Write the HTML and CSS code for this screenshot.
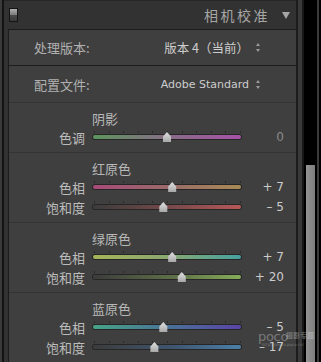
FILE: index.html
```html
<!DOCTYPE html>
<html lang="zh-CN">
<head>
    <meta charset="UTF-8">
    <meta name="viewport" content="width=device-width, initial-scale=1.0">
    <title>相机校准</title>
    <link rel="stylesheet" href="styles.css">
</head>
<body>
    <div class="app">
        <div class="side"></div>

        <div class="panel">
            <header class="panel-header">
                <div class="switch"><span class="switch-on"></span><span class="switch-off"></span></div>
                <h1>相机校准</h1>
                <span class="collapse"></span>
            </header>

            <div class="panel-body">
                <div class="select-row first">
                    <span class="select-label">处理版本:</span>
                    <span class="select-value">版本 4（当前）<span class="updown"></span></span>
                </div>
                <div class="select-row">
                    <span class="select-label">配置文件:</span>
                    <span class="select-value latin">Adobe Standard<span class="updown"></span></span>
                </div>

                <section class="group">
                    <h2>阴影</h2>
                    <div class="slider-row">
                        <span class="slider-label">色调</span>
                        <div class="slider"><div class="ticks"></div><div class="track shadow-tint"></div><span class="thumb" style="left: 50%"></span></div>
                        <span class="slider-value dim">0</span>
                    </div>
                </section>

                <section class="group">
                    <h2>红原色</h2>
                    <div class="slider-row">
                        <span class="slider-label">色相</span>
                        <div class="slider"><div class="ticks"></div><div class="track red-hue"></div><span class="thumb" style="left: 53.5%"></span></div>
                        <span class="slider-value">+ 7</span>
                    </div>
                    <div class="slider-row">
                        <span class="slider-label">饱和度</span>
                        <div class="slider"><div class="ticks"></div><div class="track red-sat"></div><span class="thumb" style="left: 47.5%"></span></div>
                        <span class="slider-value">– 5</span>
                    </div>
                </section>

                <section class="group">
                    <h2>绿原色</h2>
                    <div class="slider-row">
                        <span class="slider-label">色相</span>
                        <div class="slider"><div class="ticks"></div><div class="track green-hue"></div><span class="thumb" style="left: 53.5%"></span></div>
                        <span class="slider-value">+ 7</span>
                    </div>
                    <div class="slider-row">
                        <span class="slider-label">饱和度</span>
                        <div class="slider"><div class="ticks"></div><div class="track green-sat"></div><span class="thumb" style="left: 60%"></span></div>
                        <span class="slider-value">+ 20</span>
                    </div>
                </section>

                <section class="group">
                    <h2>蓝原色</h2>
                    <div class="slider-row">
                        <span class="slider-label">色相</span>
                        <div class="slider"><div class="ticks"></div><div class="track blue-hue"></div><span class="thumb" style="left: 47.5%"></span></div>
                        <span class="slider-value">– 5</span>
                    </div>
                    <div class="slider-row">
                        <span class="slider-label">饱和度</span>
                        <div class="slider"><div class="ticks"></div><div class="track blue-sat"></div><span class="thumb" style="left: 41.5%"></span></div>
                        <span class="slider-value">– 17</span>
                    </div>
                </section>
            </div>
        </div>

        <div class="gutter"></div>
        <div class="scrollbar"><div class="scroll-thumb"></div></div>
        <div class="edge-right"></div>

        <!-- 水印 -->
        <div class="watermark">
            <span class="wm-logo">poco</span>
            <span class="wm-text">摄影专题</span>
            <span class="wm-url">http://photo.poco.cn/</span>
        </div>
    </div>
</body>
</html>
```

FILE: styles.css
```css
:root {
    --header-bg: #323232;
    --body-bg: #3f3f3f;
    --text-color: #bdbdbd;
    --line-dark: #1c1c1c;
    --line-soft: #343434;
}

* {
    box-sizing: border-box;
    margin: 0;
    padding: 0;
}

body {
    background-color: #000;
    font-family: "Noto Sans CJK SC", "Liberation Sans", sans-serif;
    color: var(--text-color);
}

.app {
    position: relative;
    display: flex;
    width: 321px;
    height: 362px;
    overflow: hidden;
    background-color: #000;
}

.side {
    width: 4px;
    flex-shrink: 0;
    border-left: 2px solid #3a3a3a;
    background-color: #141414;
}

.panel {
    width: 294px;
    flex-shrink: 0;
    display: flex;
    flex-direction: column;
    background-color: var(--header-bg);
    border-right: 2px solid var(--line-dark);
}

/* başlık */
.panel-header {
    height: 29px;
    flex-shrink: 0;
    display: flex;
    align-items: center;
    padding-left: 5px;
    padding-right: 4px;
    border-top: 1px solid #262626;
}

.switch {
    width: 9px;
    height: 14px;
    display: flex;
    flex-direction: column;
    border: 1px solid #141414;
    background-color: #222;
}

.switch-on {
    flex: 1;
    background: linear-gradient(#b0b0b0, #7a7a7a);
}

.switch-off {
    flex: 1;
    background: linear-gradient(#4a4a4a, #3a3a3a);
}

.panel-header h1 {
    margin-left: auto;
    font-size: 14px;
    font-weight: normal;
    letter-spacing: 2.5px;
    color: #a6a6a6;
}

.collapse {
    width: 0;
    height: 0;
    margin-left: 12px;
    margin-right: 2px;
    border-left: 4px solid transparent;
    border-right: 4px solid transparent;
    border-top: 7px solid #a6a6a6;
}

/* gövde */
.panel-body {
    flex: 1;
    margin-left: 4px;
    background-color: var(--body-bg);
    border-top: 1px solid var(--line-dark);
    border-left: 1px solid var(--line-dark);
}

.select-row {
    height: 37px;
    display: flex;
    align-items: center;
    padding-left: 25px;
    padding-right: 35px;
    font-size: 13px;
    border-top: 1px solid var(--line-dark);
}

.select-row.first {
    height: 35px;
    border-top: none;
}

.select-label {
    color: #b0b0b0;
}

.select-value {
    margin-left: auto;
    display: flex;
    align-items: center;
    color: #cdcdcd;
    font-size: 12.5px;
}

.select-value.latin {
    font-family: "DejaVu Sans", "Noto Sans CJK SC", sans-serif;
    font-size: 11px;
}

.updown {
    position: relative;
    width: 5px;
    height: 9px;
    margin-left: 7px;
}

.updown::before,
.updown::after {
    content: "";
    position: absolute;
    left: 0;
    border-left: 2.5px solid transparent;
    border-right: 2.5px solid transparent;
}

.updown::before {
    top: 0;
    border-bottom: 3px solid #9a9a9a;
}

.updown::after {
    bottom: 0;
    border-top: 3px solid #9a9a9a;
}

/* kaydırıcı grupları */
.group {
    padding: 7px 12px 5px 0;
    border-top: 1px solid var(--line-soft);
}

.group h2 {
    height: 17px;
    line-height: 17px;
    padding-left: 83px;
    font-size: 13px;
    font-weight: normal;
    color: #b8b8b8;
}

.slider-row {
    height: 20px;
    display: flex;
    align-items: center;
}

.slider-label {
    width: 76px;
    text-align: right;
    font-size: 13px;
    color: #bcbcbc;
}

.slider {
    position: relative;
    width: 148px;
    height: 20px;
    margin-left: 8px;
}

.ticks {
    position: absolute;
    left: 1px;
    right: 0;
    top: 4px;
    height: 2px;
    background: repeating-linear-gradient(to right, #2a2a2a 0 1px, transparent 1px 14.6px);
}

.track {
    position: absolute;
    left: 0;
    right: 0;
    top: 8px;
    height: 4px;
    border-radius: 2px;
    box-shadow: 0 0 0 1px #262626;
}

.shadow-tint { background: linear-gradient(to right, #5c955c, #8a6a8a 55%, #a652a6); }
.red-hue { background: linear-gradient(to right, #a84a78, #9a6a6a 50%, #a88a55); }
.red-sat { background: linear-gradient(to right, #3c3c3c, #7a4a4a 55%, #b85858); }
.green-hue { background: linear-gradient(to right, #a6b458, #8aa870 50%, #45a2a0); }
.green-sat { background: linear-gradient(to right, #3c3c3c, #5f7048 55%, #86ac58); }
.blue-hue { background: linear-gradient(to right, #46a488, #4a6e98 55%, #5a44a8); }
.blue-sat { background: linear-gradient(to right, #3c3c3c, #3f5670 55%, #4c80a8); }

.thumb {
    position: absolute;
    top: 5px;
    width: 10px;
    height: 10px;
    margin-left: -5px;
    background: linear-gradient(#e0e0e0, #a8a8a8);
    clip-path: polygon(50% 0, 90% 45%, 90% 100%, 10% 100%, 10% 45%);
    filter: drop-shadow(0 0 0.5px #111);
}

.slider-value {
    flex: 1;
    text-align: right;
    font-family: "DejaVu Sans", sans-serif;
    font-size: 12px;
    color: #cccccc;
}

.slider-value.dim {
    color: #8a8a8a;
}

/* kaydırma çubuğu */
.gutter {
    width: 6px;
    flex-shrink: 0;
    border-left: 4px solid #3a3a3a;
    background-color: #181818;
}

.scrollbar {
    width: 13px;
    flex-shrink: 0;
    padding: 0 2px;
    background-color: #000;
    display: flex;
    flex-direction: column;
}

.scroll-thumb {
    margin-top: 165px;
    flex: 1;
    background: linear-gradient(to right, #959595, #7d7d7d);
}

.edge-right {
    width: 4px;
    flex-shrink: 0;
    border-left: 2px solid #3a3a3a;
    background-color: #000;
}

.watermark {
    position: absolute;
    left: 258px;
    top: 331px;
    width: 60px;
    height: 16px;
    color: rgba(255, 255, 255, 0.3);
}

.wm-logo {
    position: absolute;
    left: 0;
    top: 0;
    font-family: "DejaVu Sans", sans-serif;
    font-size: 13px;
    line-height: 11px;
    letter-spacing: -0.3px;
}

.wm-text {
    position: absolute;
    left: 28px;
    top: 0;
    font-size: 7px;
    line-height: 8px;
    font-weight: bold;
}

.wm-url {
    position: absolute;
    left: 4px;
    top: 11px;
    font-family: "DejaVu Sans", sans-serif;
    font-size: 4px;
    line-height: 5px;
}
```
